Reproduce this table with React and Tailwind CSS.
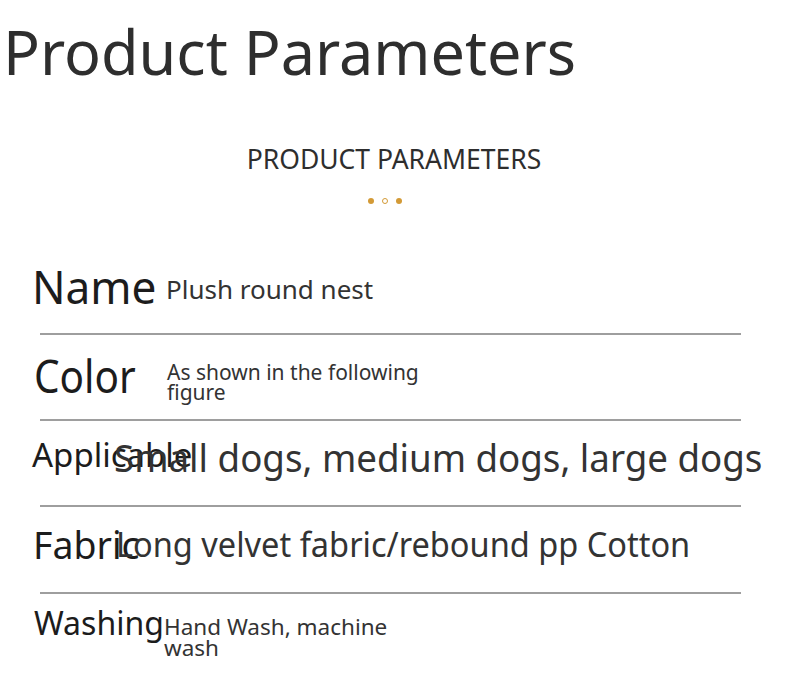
export default function App() {
  const font = { fontFamily: '"Noto Sans", "Open Sans", sans-serif' };
  return (
    <div className="w-[790px] h-[700px] bg-white overflow-hidden text-[#333]" style={font}>
      <div className="pt-[20px] pl-[3px]">
        <div className="inline-block origin-left scale-x-[0.986] text-[62px] leading-none whitespace-nowrap text-[#2e2e2e]">
          Product Parameters
        </div>
      </div>
      <div className="mt-[64px] pr-[2px] text-center text-[26.5px] leading-none text-[#2e2e2e]">PRODUCT PARAMETERS</div>
      <div className="mt-[25px] flex gap-[8px] pl-[368px]">
        <span className="w-[6px] h-[6px] rounded-full bg-[#d39a36]"></span>
        <span className="w-[6px] h-[6px] rounded-full border border-[#d39a36] bg-white"></span>
        <span className="w-[6px] h-[6px] rounded-full bg-[#d39a36]"></span>
      </div>

      <div className="mt-[37px] w-[790px]">
        {/* Name */}
        <div className="h-[92px] flex items-start pl-[32px]">
          <div className="w-[134px] shrink-0 mt-[22px] text-[46px] leading-none text-[#1c1c1c] whitespace-nowrap">
            <span className="inline-block origin-left scale-x-[0.96]">Name</span>
          </div>
          <div className="mt-[35px] text-[26px] leading-none whitespace-nowrap">Plush round nest</div>
        </div>
        <div className="ml-[40px] w-[701px] h-[2px] bg-[#9e9e9e]"></div>

        {/* Color */}
        <div className="h-[84px] flex items-start pl-[34px]">
          <div className="w-[133px] shrink-0 mt-[18px] text-[45px] leading-none text-[#1c1c1c] whitespace-nowrap">
            <span className="inline-block origin-left scale-x-[0.9]">Color</span>
          </div>
          <div className="mt-[27px] text-[21px] leading-[20px] whitespace-nowrap">
            <div>As shown in the following</div>
            <div>figure</div>
          </div>
        </div>
        <div className="ml-[40px] w-[701px] h-[2px] bg-[#9e9e9e]"></div>

        {/* Applicable */}
        <div className="h-[84px] flex items-start pl-[32px]">
          <div className="w-[82px] shrink-0 mt-[17px] text-[33px] leading-none text-[#1c1c1c] whitespace-nowrap">
            Applicable
          </div>
          <div className="mt-[17px] text-[38px] leading-none whitespace-nowrap">
            <span className="inline-block origin-left scale-x-[0.966]">Small dogs, medium dogs, large dogs</span>
          </div>
        </div>
        <div className="ml-[40px] w-[701px] h-[2px] bg-[#9e9e9e]"></div>

        {/* Fabric */}
        <div className="h-[85px] flex items-start pl-[33px]">
          <div className="w-[83px] shrink-0 mt-[17px] text-[39px] leading-none text-[#1c1c1c] whitespace-nowrap">
            <span className="inline-block origin-left scale-x-[0.96]">Fabric</span>
          </div>
          <div className="mt-[20px] text-[34px] leading-none whitespace-nowrap">
            <span className="inline-block origin-left scale-x-[0.957]">Long velvet fabric/rebound pp Cotton</span>
          </div>
        </div>
        <div className="ml-[40px] w-[701px] h-[2px] bg-[#9e9e9e]"></div>

        {/* Washing */}
        <div className="flex items-start pl-[34px]">
          <div className="w-[130px] shrink-0 mt-[13px] text-[32px] leading-none text-[#1c1c1c] whitespace-nowrap">Washing</div>
          <div className="mt-[22px] text-[22.5px] leading-[21px] whitespace-nowrap">
            <div>Hand Wash, machine</div>
            <div>wash</div>
          </div>
        </div>
      </div>
    </div>
  );
}
